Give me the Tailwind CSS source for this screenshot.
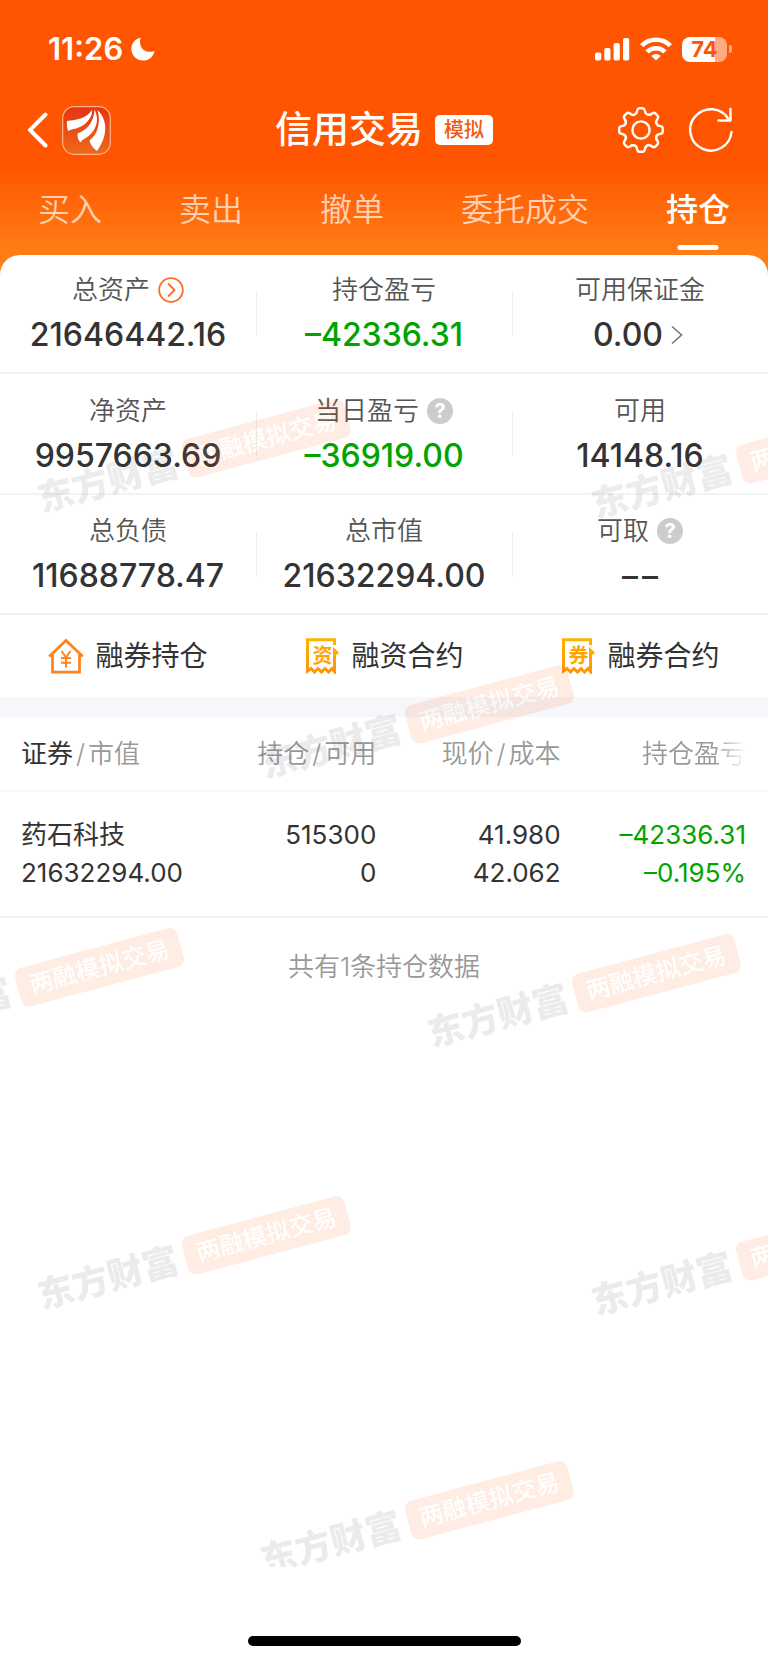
<!DOCTYPE html>
<html lang="zh-CN">
<head>
<meta charset="utf-8">
<meta name="viewport" content="width=device-width, initial-scale=1">
<title>信用交易</title>
<script src="https://cdn.jsdelivr.net/npm/@tailwindcss/browser@4"></script>
</head>
<body class="flex min-h-screen flex-col bg-white font-[Inter,'Noto_Sans_CJK_SC',sans-serif] text-[#333]">

<header class="bg-linear-to-b from-[#ff5500] from-60% to-[#ff8519] pb-5 text-white">
  <div class="flex h-[98px] items-center justify-between pr-9 pl-12">
    <div class="flex items-center gap-2">
      <span class="text-[31px] leading-9 font-semibold">11:26</span>
      <svg class="size-6" viewBox="0 0 24 24" fill="currentColor" aria-hidden="true"><path d="M9.6.6A12 12 0 0 0 9 4.400C9 11 13.300 14.800 18.600 14.800 20.400 14.800 22 14.500 23.600 13.900 22.300 19.800 17.800 23.600 12.100 23.600 5.600 23.600.4 18.400.4 12 .4 6.700 4 2 9.600.6Z"/></svg>
    </div>
    <div class="flex items-center gap-[10px]">
      <svg class="h-6 w-[35px]" viewBox="0 0 35 24" fill="currentColor" aria-hidden="true"><rect x="0" y="15.500" width="6.200" height="8" rx="1.800"/><rect x="9.300" y="11" width="6.200" height="12.500" rx="1.800"/><rect x="18.600" y="6" width="6.200" height="17.500" rx="1.800"/><rect x="28" y="1" width="6.200" height="22.500" rx="1.800"/></svg>
      <svg class="h-6 w-8" viewBox="0 0 32 24" aria-hidden="true"><g fill="none" stroke="currentColor" stroke-width="4.600"><path d="M1.700 8.600a20.500 20.500 0 0 1 28.600 0"/><path d="M7 14.800a13 13 0 0 1 18 0"/></g><path fill="currentColor" d="M16 23.600l-4.700-4.700a7 7 0 0 1 9.400 0z"/></svg>
      <div class="flex items-center">
        <span class="flex h-[25px] w-[45px] items-center justify-center rounded-[8px] bg-linear-to-r from-white from-73% to-white/50 to-73% text-[22px] leading-6 font-bold text-[#ff5500]">74</span>
        <span class="ml-[2px] h-2 w-[3px] rounded-r-full bg-white/50"></span>
      </div>
    </div>
  </div>

  <div class="grid h-16 grid-cols-[1fr_auto_1fr] items-center pr-[34px] pl-[26px]">
    <div class="flex items-center gap-[13px]">
      <button type="button" aria-label="返回"><svg class="h-9 w-[23px]" viewBox="0 0 23 36" fill="none" stroke="currentColor" stroke-width="4" stroke-linecap="round" stroke-linejoin="round"><path d="M19.500 2.500 4 18 19.500 33.500"/></svg></button>
      <a href="#" aria-label="东方财富"><svg class="size-[49px]" viewBox="0 0 49 49"><defs><linearGradient id="logo" x1="0" y1="0" x2="0" y2="1"><stop offset="0" stop-color="#e63214"/><stop offset="1" stop-color="#ee6a17"/></linearGradient></defs><rect x=".7" y=".7" width="47.600" height="47.600" rx="11.500" fill="url(#logo)" stroke="#ffb48c" stroke-width="1.200"/><g fill="#fff"><path d="M5 15C15 14 25 12 30 4c.8 8-7 16-16 18.500-3 .8-6 1.200-8 2.500C5 21 4.600 18 5 15Z"/><path d="M15.500 27.500C25 24 32 16 32.500 3.500 39 16 32 28 22 33c-1.500.8-2.800 2-3.500 3.500-2.400-2.500-3.200-5.500-3-9Z"/><path d="M35.500 4C46 14 46 30 35 45c-4-3-6.500-6-7.500-10.500C36 28 39 16 35.500 4Z"/></g></svg></a>
    </div>
    <div class="flex items-center gap-3 pl-2">
      <h1 class="text-[37px] leading-10 font-medium">信用交易</h1>
      <span class="rounded-[5px] bg-white px-[9px] text-[20px] leading-[30px] font-medium text-[#f25a14]">模拟</span>
    </div>
    <div class="flex items-center justify-end gap-6">
      <button type="button" aria-label="设置"><svg class="size-[46px]" viewBox="-23 -23 46 46" fill="none" stroke="currentColor" stroke-width="2.400" stroke-linecap="round"><defs><path id="tooth" d="M-4.400-17.400-3.600-20.200Q-3.200-21.800-1.600-21.800H1.600Q3.200-21.800 3.600-20.200L4.400-17.400Q5.600-14.400 9.190-15.410"/></defs><use href="#tooth"/><use href="#tooth" transform="rotate(45)"/><use href="#tooth" transform="rotate(90)"/><use href="#tooth" transform="rotate(135)"/><use href="#tooth" transform="rotate(180)"/><use href="#tooth" transform="rotate(225)"/><use href="#tooth" transform="rotate(270)"/><use href="#tooth" transform="rotate(315)"/><circle r="8.600"/></svg></button>
      <button type="button" aria-label="刷新"><svg class="size-[46px]" viewBox="-23 -23 46 46" fill="none" stroke="currentColor" stroke-width="2.400" stroke-linecap="round" stroke-linejoin="round"><path d="M20.500 2A20.700 20.700 0 1 1 17.500-11"/><path d="M19.500-21V-9.500H7.500"/></svg></button>
    </div>
  </div>

  <nav class="flex h-[93px] justify-between px-[38px] text-[32px] leading-[96px] font-[350] text-white/70">
    <a href="#">买入</a>
    <a href="#">卖出</a>
    <a href="#">撤单</a>
    <a href="#">委托成交</a>
    <a href="#" aria-current="page" class="relative h-[93px] font-medium text-white">持仓<span class="absolute bottom-[5px] left-1/2 h-[5px] w-[41px] -translate-x-1/2 rounded-full bg-white"></span></a>
  </nav>
</header>

<main class="relative -mt-5 flex-1 overflow-hidden rounded-t-[20px] bg-white">
  <dl class="text-center">
    <div class="grid h-[119px] grid-cols-3 border-b-2 border-[#f3f3f4]">
      <div class="relative pt-[17px]">
        <dt class="flex items-center justify-center gap-2 text-[26px] leading-9 font-[350] text-[#555]">总资产<button type="button" aria-label="总资产明细"><svg class="size-[26px]" viewBox="0 0 26 26" fill="none" stroke="#ff6b26" stroke-width="1.800" stroke-linecap="round" stroke-linejoin="round"><circle cx="13" cy="13" r="11.800"/><path d="m10.500 7 6 6-6 6"/></svg></button></dt>
        <dd class="mt-[7px] text-[32px] leading-10 font-medium">21646442.16</dd>
      </div>
      <div class="relative pt-[17px] before:absolute before:top-9 before:left-0 before:h-[45px] before:w-px before:bg-[#ececec]">
        <dt class="text-[26px] leading-9 font-[350] text-[#555]">持仓盈亏</dt>
        <dd class="mt-[7px] text-[32px] leading-10 font-medium text-[#00a300]">–42336.31</dd>
      </div>
      <div class="relative pt-[17px] before:absolute before:top-9 before:left-0 before:h-[45px] before:w-px before:bg-[#ececec]">
        <dt class="text-[26px] leading-9 font-[350] text-[#555]">可用保证金</dt>
        <dd class="mt-[7px] flex items-center justify-center gap-2 pr-1 text-[32px] leading-10 font-medium">0.00<svg class="h-5 w-3" viewBox="0 0 12 20" fill="none" stroke="#777" stroke-width="1.600" aria-hidden="true"><path d="m1 1.500 9.500 8.500L1 18.500"/></svg></dd>
      </div>
    </div>
    <div class="grid h-[121px] grid-cols-3 border-b-2 border-[#f3f3f4]">
      <div class="relative pt-[19px]">
        <dt class="text-[26px] leading-9 font-[350] text-[#555]">净资产</dt>
        <dd class="mt-[7px] text-[32px] leading-10 font-medium">9957663.69</dd>
      </div>
      <div class="relative pt-[19px] before:absolute before:top-[37px] before:left-0 before:h-[45px] before:w-px before:bg-[#ececec]">
        <dt class="flex items-center justify-center gap-2 text-[26px] leading-9 font-[350] text-[#555]">当日盈亏<button type="button" aria-label="说明" class="size-[26px] rounded-full bg-[#ccc] text-[20px] leading-[26px] font-bold text-white">?</button></dt>
        <dd class="mt-[7px] text-[32px] leading-10 font-medium text-[#00a300]">–36919.00</dd>
      </div>
      <div class="relative pt-[19px] before:absolute before:top-[37px] before:left-0 before:h-[45px] before:w-px before:bg-[#ececec]">
        <dt class="text-[26px] leading-9 font-[350] text-[#555]">可用</dt>
        <dd class="mt-[7px] text-[32px] leading-10 font-medium">14148.16</dd>
      </div>
    </div>
    <div class="grid h-[120px] grid-cols-3 border-b-2 border-[#f0f0f1]">
      <div class="relative pt-[18px]">
        <dt class="text-[26px] leading-9 font-[350] text-[#555]">总负债</dt>
        <dd class="mt-[7px] text-[32px] leading-10 font-medium">11688778.47</dd>
      </div>
      <div class="relative pt-[18px] before:absolute before:top-[37px] before:left-0 before:h-[45px] before:w-px before:bg-[#ececec]">
        <dt class="text-[26px] leading-9 font-[350] text-[#555]">总市值</dt>
        <dd class="mt-[7px] text-[32px] leading-10 font-medium">21632294.00</dd>
      </div>
      <div class="relative pt-[18px] before:absolute before:top-[37px] before:left-0 before:h-[45px] before:w-px before:bg-[#ececec]">
        <dt class="flex items-center justify-center gap-2 text-[26px] leading-9 font-[350] text-[#555]">可取<button type="button" aria-label="说明" class="size-[26px] rounded-full bg-[#ccc] text-[20px] leading-[26px] font-bold text-white">?</button></dt>
        <dd class="mt-[7px] flex justify-center gap-1 text-[32px] leading-10 font-medium"><span>–</span><span>–</span></dd>
      </div>
    </div>
  </dl>

  <nav class="grid h-[82px] grid-cols-3 text-[28px] leading-10">
    <a href="#" class="flex items-center justify-center gap-[11px]">
      <svg class="size-9" viewBox="0 0 36 36" fill="none" stroke="#ff8420" stroke-width="2.800" aria-hidden="true"><path d="M1.200 18.500 18 2.500 34.800 18.500"/><path d="M4.500 15.500V34.200H31.500V15.500"/><path stroke-width="2" d="m13.500 13 4.500 6.500 4.500-6.500M18 19.500V29.500M13 20h10M13 24.800h10"/></svg>融券持仓</a>
    <a href="#" class="flex items-center justify-center gap-[11px]">
      <span class="relative flex size-9 items-center justify-center text-[20px] leading-9 font-bold text-[#ffa500]"><svg class="absolute inset-0 size-9" viewBox="0 0 36 36" aria-hidden="true"><defs><linearGradient id="gold" gradientUnits="userSpaceOnUse" x1="0" y1="0" x2="0" y2="36"><stop offset="0" stop-color="#ffb400"/><stop offset="1" stop-color="#ff9208"/></linearGradient></defs><path fill="none" stroke="url(#gold)" stroke-width="3" d="M30.500 7V1.800H3.500V33L7 30.500l3.500 3.500L14 30.500l3.500 3.500L21 30.500l3.500 3.500L28 30.500l2.500 3V12"/><path fill="#ffa808" d="m29 9 6 5.500L29 20z"/></svg>资</span>融资合约</a>
    <a href="#" class="flex items-center justify-center gap-[11px]">
      <span class="relative flex size-9 items-center justify-center text-[20px] leading-9 font-bold text-[#ffa500]"><svg class="absolute inset-0 size-9" viewBox="0 0 36 36" aria-hidden="true"><path fill="none" stroke="url(#gold)" stroke-width="3" d="M30.500 7V1.800H3.500V33L7 30.500l3.500 3.500L14 30.500l3.500 3.500L21 30.500l3.500 3.500L28 30.500l2.500 3V12"/><path fill="#ffa808" d="m29 9 6 5.500L29 20z"/></svg>券</span>融券合约</a>
  </nav>

  <div class="h-5 bg-[#f6f7fa]"></div>

  <table class="w-full table-fixed text-right text-[26px]">
    <colgroup><col class="w-[26%]"><col class="w-[23%]"><col class="w-[24%]"><col class="w-[27%]"></colgroup>
    <thead class="text-[#999]">
      <tr class="h-[74px] border-b-2 border-[#f8f8f9] leading-9">
        <th scope="col" class="pl-[21px] text-left font-[350] whitespace-nowrap"><span class="font-normal text-[#333]">证券</span><span class="px-[3px]">/</span>市值</th>
        <th scope="col" class="font-[350] whitespace-nowrap">持仓<span class="px-[3px]">/</span>可用</th>
        <th scope="col" class="font-[350] whitespace-nowrap">现价<span class="px-[3px]">/</span>成本</th>
        <th scope="col" class="pr-[22px] font-[350]"><span class="[mask-image:linear-gradient(to_right,#000_70%,transparent)]">持仓盈亏</span></th>
      </tr>
    </thead>
    <tbody>
      <tr class="h-[126px] border-b-2 border-[#f3f3f4] align-middle leading-[38px]">
        <td class="pl-[21px] text-left whitespace-nowrap"><div>药石科技</div><div>21632294.00</div></td>
        <td><div>515300</div><div>0</div></td>
        <td><div>41.980</div><div>42.062</div></td>
        <td class="pr-[22px] text-[#00a300]"><div>–42336.31</div><div>–0.195%</div></td>
      </tr>
    </tbody>
  </table>

  <p class="pt-[31px] text-center text-[26px] leading-9 font-[350] text-[#999]">共有1条持仓数据</p>

  <!-- Tiled watermark above the content -->
  <div class="pointer-events-none absolute inset-0 text-[36px] leading-10 font-black whitespace-nowrap text-[#444] select-none" aria-hidden="true">
    <div class="absolute top-[203px] left-[193px] flex -translate-1/2 -rotate-15 items-center gap-2 opacity-10"><span>东方财富</span><span class="rounded-[8px] bg-[#ff5500] px-3 text-[24px] font-medium text-white">两融模拟交易</span></div>
    <div class="absolute top-[209px] left-[747px] flex -translate-1/2 -rotate-15 items-center gap-2 opacity-10"><span>东方财富</span><span class="rounded-[8px] bg-[#ff5500] px-3 text-[24px] font-medium text-white">两融模拟交易</span></div>
    <div class="absolute top-[469px] left-[416px] flex -translate-1/2 -rotate-15 items-center gap-2 opacity-10"><span>东方财富</span><span class="rounded-[8px] bg-[#ff5500] px-3 text-[24px] font-medium text-white">两融模拟交易</span></div>
    <div class="absolute top-[732px] left-[26px] flex -translate-1/2 -rotate-15 items-center gap-2 opacity-10"><span>东方财富</span><span class="rounded-[8px] bg-[#ff5500] px-3 text-[24px] font-medium text-white">两融模拟交易</span></div>
    <div class="absolute top-[738px] left-[583px] flex -translate-1/2 -rotate-15 items-center gap-2 opacity-10"><span>东方财富</span><span class="rounded-[8px] bg-[#ff5500] px-3 text-[24px] font-medium text-white">两融模拟交易</span></div>
    <div class="absolute top-[1000px] left-[193px] flex -translate-1/2 -rotate-15 items-center gap-2 opacity-10"><span>东方财富</span><span class="rounded-[8px] bg-[#ff5500] px-3 text-[24px] font-medium text-white">两融模拟交易</span></div>
    <div class="absolute top-[1006px] left-[747px] flex -translate-1/2 -rotate-15 items-center gap-2 opacity-10"><span>东方财富</span><span class="rounded-[8px] bg-[#ff5500] px-3 text-[24px] font-medium text-white">两融模拟交易</span></div>
    <div class="absolute top-[1265px] left-[416px] flex -translate-1/2 -rotate-15 items-center gap-2 opacity-10"><span>东方财富</span><span class="rounded-[8px] bg-[#ff5500] px-3 text-[24px] font-medium text-white">两融模拟交易</span></div>
  </div>
</main>

<footer class="flex h-24 items-end justify-center pb-[17px]">
  <div class="h-[10px] w-[273px] rounded-full bg-black"></div>
</footer>
</body>
</html>
